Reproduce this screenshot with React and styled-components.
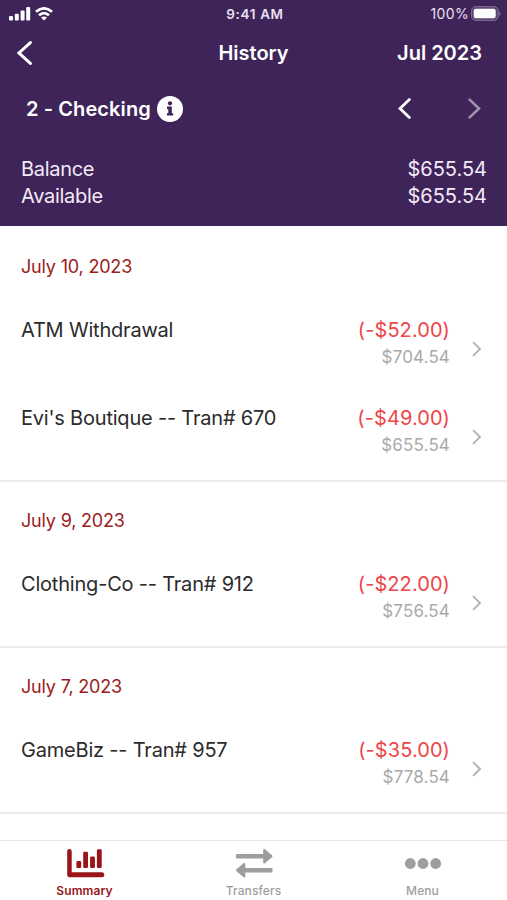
import React from "react";
import styled, { createGlobalStyle } from "styled-components";

const GlobalStyle = createGlobalStyle`
    * {
        box-sizing: border-box;
    }

    body {
        margin: 0;
        background: #fff;
        font-family: Inter, "Liberation Sans", sans-serif;
    }
`;

const Screen = styled.div`
    display: flex;
    flex-direction: column;
    width: 507px;
    height: 900px;
    overflow: hidden;
    background: #fff;
`;

const Header = styled.header`
    height: 226px;
    flex: none;
    color: #fff;
    background: #3f245a;
`;

const StatusBar = styled.div`
    display: grid;
    grid-template-columns: 1fr auto 1fr;
    align-items: center;
    height: 27px;
    padding: 0 6px 0 9px;
    color: #e9e1f0;
`;

const StatusIcons = styled.div`
    display: flex;
    align-items: center;
    gap: ${({ $gap }) => $gap || "4px"};
    justify-content: ${({ $end }) => ($end ? "flex-end" : "flex-start")};
`;

const Clock = styled.span`
    font-size: 13.5px;
    font-weight: 600;
    letter-spacing: 0.65px;
`;

const BatteryLevel = styled.span`
    font-size: 14px;
    letter-spacing: 0.35px;
`;

const NavBar = styled.nav`
    display: grid;
    grid-template-columns: 1fr auto 1fr;
    align-items: center;
    height: 52px;
    padding: 0 17px;
`;

const IconButton = styled.button`
    display: flex;
    padding: 0;
    border: 0;
    color: inherit;
    background: none;
    opacity: ${({ disabled }) => (disabled ? 0.5 : 1)};
`;

const NavTitle = styled.h1`
    margin: 0;
    font-size: 20px;
    font-weight: 600;
`;

const Month = styled.span`
    justify-self: end;
    margin-right: 8px;
    font-size: 20px;
    font-weight: 600;
`;

const AccountBar = styled.div`
    display: flex;
    align-items: center;
    justify-content: space-between;
    height: 59px;
    padding: 0 26px 0 26px;
`;

const AccountName = styled.h2`
    display: flex;
    align-items: center;
    gap: 6px;
    margin: 0;
    font-size: 20px;
    font-weight: 600;
    letter-spacing: 0.1px;
`;

const AccountArrows = styled.div`
    display: flex;
    gap: 57px;
`;

const Balances = styled.div`
    padding: 18px 20px 0 21px;
    color: #f3eaf8;
`;

const BalanceRow = styled.div`
    display: flex;
    justify-content: space-between;
    font-size: 20px;
    line-height: 27px;
`;

const BalanceLabel = styled.span`
    letter-spacing: -0.3px;
`;

const History = styled.main`
    flex: 1;
    padding-top: 1px;
`;

const Day = styled.section`
    box-shadow: inset 0 -1px #ececec, 0 1px #ececec;
`;

const DayTitle = styled.h3`
    height: 78px;
    margin: 0;
    padding-left: 21px;
    color: #9c1c20;
    font-size: 18px;
    font-weight: 400;
    letter-spacing: -0.18px;
    line-height: 79px;
`;

const Transaction = styled.div`
    display: flex;
    height: 88px;
    padding: 11px 25px 0 21px;
`;

const Description = styled.span`
    flex: 1;
    color: #2b2b2b;
    font-size: 20px;
    letter-spacing: -0.2px;
    line-height: 28px;
`;

const Amounts = styled.div`
    display: flex;
    flex-direction: column;
    align-items: flex-end;
    margin-right: 22px;
`;

const Amount = styled.span`
    color: #ee4548;
    font-size: 20px;
    letter-spacing: 0.08px;
    line-height: 28px;
`;

const Running = styled.span`
    color: #a9a9a9;
    font-size: 17px;
    letter-spacing: 0.15px;
    line-height: 27px;
`;

const RowArrow = styled.div`
    height: 65px;
    display: flex;
    align-items: center;
    color: #b5b5b5;
`;

const TabBar = styled.footer`
    display: grid;
    grid-template-columns: repeat(3, 1fr);
    height: 60px;
    border-top: 1px solid #e6e6e6;
    background: #fff;
`;

const Tab = styled.a`
    display: flex;
    flex-direction: column;
    align-items: center;
    padding-top: 7px;
    color: ${({ $active }) => ($active ? "#99151a" : "#9e9e9e")};
    font-size: 12px;
    font-weight: ${({ $active }) => ($active ? 600 : 500)};
    letter-spacing: 0.1px;
    line-height: 16px;
`;

const TabIcon = styled.svg`
    flex: none;
    width: 40px;
    height: 30px;
    margin-bottom: 5px;
    fill: currentColor;
`;

const Chevron = ({ width, height, stroke, right }) => (
    <svg width={width} height={height} fill="none" stroke="currentColor" strokeWidth={stroke} strokeLinecap="round">
        <path
            d={
                right
                    ? `M1.6 1.6L${width - 2} ${height / 2}L1.6 ${height - 1.6}`
                    : `M${width - 1.6} 1.6L2 ${height / 2}L${width - 1.6} ${height - 1.6}`
            }
        />
    </svg>
);

const SignalIcon = () => (
    <svg width="22" height="14" fill="#fff">
        <rect x="0" y="9" width="4" height="4.5" rx="1" />
        <rect x="5.8" y="6.8" width="4" height="6.7" rx="1" />
        <rect x="11.6" y="3.6" width="4" height="9.9" rx="1" />
        <rect x="17.2" y="0" width="4" height="13.5" rx="1" />
    </svg>
);

const WifiIcon = () => (
    <svg width="18" height="14" viewBox="0 0 18 14" fill="none" stroke="#fff" strokeWidth="2.8">
        <path d="M1 4.8Q9 -2 17 4.8" />
        <path d="M4 8.3Q9 4 14 8.3" />
        <path d="M9 13.5L6 10.6Q9 8.4 12 10.6Z" fill="#fff" stroke="none" />
    </svg>
);

const BatteryIcon = () => (
    <svg width="30" height="15" viewBox="0 0 30 15">
        <rect x="0.5" y="0.6" width="26.8" height="13.8" rx="4.3" fill="#5c4575" stroke="#806f94" />
        <rect x="2.7" y="2.8" width="22" height="9.4" rx="2.2" fill="#fff" />
        <path d="M28.2 5.2Q31 7.5 28.2 9.8Z" fill="#806f94" />
    </svg>
);

const InfoIcon = () => (
    <svg width="26" height="26" viewBox="0 0 26 26">
        <circle cx="13" cy="13" r="13" fill="#fff" />
        <g fill="#3f245a">
            <circle cx="13" cy="7.3" r="2.1" />
            <path d="M10 10.6h4.8v6.6h1.4v2.4H9.9v-2.4h1.4V13H10z" />
        </g>
    </svg>
);

const SummaryIcon = () => (
    <TabIcon viewBox="0 0 40 30">
        <path d="M2.2 3.2a2.2 2.2 0 0 1 4.5 0V24.2H36.8a2.5 2.5 0 0 1 0 5H5Q2.2 29.2 2.2 26.4Z" />
        <rect x="11.4" y="12.9" width="4.8" height="7" rx="1.2" />
        <rect x="18.2" y="3.8" width="4.8" height="16.1" rx="1.2" />
        <rect x="25.1" y="8.5" width="4.8" height="11.4" rx="1.2" />
        <rect x="31.9" y="1.3" width="4.8" height="18.6" rx="1.2" />
    </TabIcon>
);

const TransfersIcon = () => (
    <TabIcon viewBox="0 0 40 30">
        <path d="M3 6H29.2V2Q29.4 0.2 31 1.2L38 7.3Q39 8.2 38 9.2L31 15.2Q29.4 16.2 29.2 14.4V10.5H3Q2 10.5 2 9.5V7Q2 6 3 6Z" />
        <path d="M37.5 20H11.3V16Q11.1 14.2 9.5 15.2L2.5 21.3Q1.5 22.2 2.5 23.2L9.5 29.2Q11.1 30.2 11.3 28.4V24.5H37.5Q38.5 24.5 38.5 23.5V21Q38.5 20 37.5 20Z" />
    </TabIcon>
);

const MenuIcon = () => (
    <TabIcon viewBox="0 0 40 30">
        <circle cx="7.3" cy="15.5" r="5.4" />
        <circle cx="20" cy="15.5" r="5.4" />
        <circle cx="32.7" cy="15.5" r="5.4" />
    </TabIcon>
);

const days = [
    {
        date: "July 10, 2023",
        items: [
            { name: "ATM Withdrawal", amount: "(-$52.00)", balance: "$704.54" },
            { name: "Evi's Boutique -- Tran# 670", amount: "(-$49.00)", balance: "$655.54" },
        ],
    },
    {
        date: "July 9, 2023",
        items: [{ name: "Clothing-Co -- Tran# 912", amount: "(-$22.00)", balance: "$756.54" }],
    },
    {
        date: "July 7, 2023",
        items: [{ name: "GameBiz -- Tran# 957", amount: "(-$35.00)", balance: "$778.54" }],
    },
];

const App = () => {
    return (
        <Screen>
            <GlobalStyle />
            <Header>
                <StatusBar>
                    <StatusIcons>
                        <SignalIcon />
                        <WifiIcon />
                    </StatusIcons>
                    <Clock>9:41 AM</Clock>
                    <StatusIcons $end $gap="2px">
                        <BatteryLevel>100%</BatteryLevel>
                        <BatteryIcon />
                    </StatusIcons>
                </StatusBar>
                <NavBar>
                    <IconButton aria-label="Back">
                        <Chevron width={15} height={24} stroke={3} />
                    </IconButton>
                    <NavTitle>History</NavTitle>
                    <Month>Jul 2023</Month>
                </NavBar>
                <AccountBar>
                    <AccountName>
                        2 - Checking
                        <InfoIcon />
                    </AccountName>
                    <AccountArrows>
                        <IconButton aria-label="Previous account">
                            <Chevron width={13} height={21} stroke={2.8} />
                        </IconButton>
                        <IconButton aria-label="Next account" disabled>
                            <Chevron width={13} height={21} stroke={2.6} right />
                        </IconButton>
                    </AccountArrows>
                </AccountBar>
                <Balances>
                    <BalanceRow>
                        <BalanceLabel>Balance</BalanceLabel>
                        <span>$655.54</span>
                    </BalanceRow>
                    <BalanceRow>
                        <BalanceLabel>Available</BalanceLabel>
                        <span>$655.54</span>
                    </BalanceRow>
                </Balances>
            </Header>
            <History>
                {days.map((day) => (
                    <Day key={day.date}>
                        <DayTitle>{day.date}</DayTitle>
                        {day.items.map((item) => (
                            <Transaction key={item.name}>
                                <Description>{item.name}</Description>
                                <Amounts>
                                    <Amount>{item.amount}</Amount>
                                    <Running>{item.balance}</Running>
                                </Amounts>
                                <RowArrow>
                                    <Chevron width={10} height={16} stroke={2} right />
                                </RowArrow>
                            </Transaction>
                        ))}
                    </Day>
                ))}
            </History>
            <TabBar>
                <Tab $active>
                    <SummaryIcon />
                    Summary
                </Tab>
                <Tab>
                    <TransfersIcon />
                    Transfers
                </Tab>
                <Tab>
                    <MenuIcon />
                    Menu
                </Tab>
            </TabBar>
        </Screen>
    );
};

export default App;
